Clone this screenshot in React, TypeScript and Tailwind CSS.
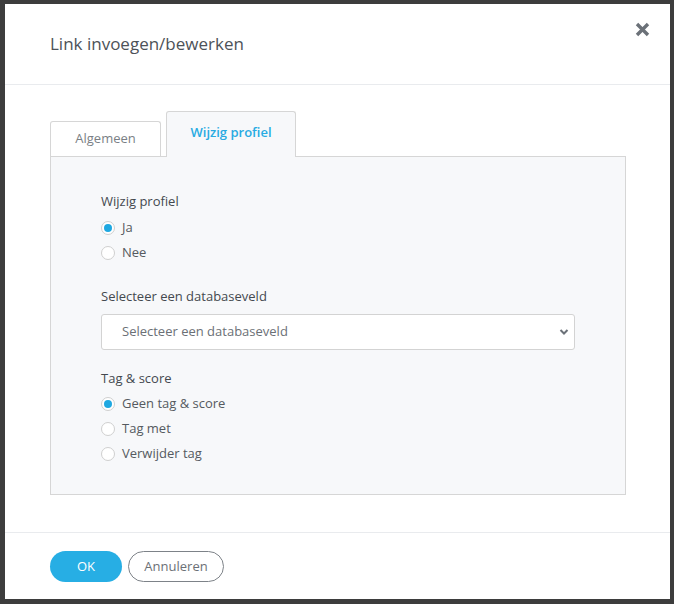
import React from 'react';

const font = { fontFamily: '"Open Sans", "Noto Sans", Arial, sans-serif' };

function Radio({ label, checked }: { label: string; checked?: boolean }) {
  return (
    <label className="flex h-[25px] items-center gap-[7px] text-[13px] text-[#555a60]">
      <span className="flex h-[14px] w-[14px] items-center justify-center rounded-full border border-[#cfcfcf] bg-white">
        {checked && <span className="h-[8px] w-[8px] rounded-full bg-[#1fa8e1]" />}
      </span>
      {label}
    </label>
  );
}

export default function App() {
  return (
    <div className="min-h-screen bg-[#3d3d3d] pl-[5px] pt-[4px]" style={font}>
      <div className="flex h-[595px] w-[665px] flex-col bg-white">
        {/* header */}
        <div className="flex h-[81px] items-center border-b border-[#e9ebee] pl-[45px] pr-[20px]">
          <h2 className="flex-1 text-[17px] text-[#4d5258]">Link invoegen/bewerken</h2>
          <button className="mt-[-30px] text-[#6b7178]">
            <svg width="15" height="15" viewBox="0 0 15 15">
              <path d="M2 2 L13 13 M13 2 L2 13" stroke="currentColor" strokeWidth="3.4" strokeLinecap="butt" />
            </svg>
          </button>
        </div>

        {/* body */}
        <div className="flex-1 pl-[45px] pr-[44px] pt-[26px]">
          <div className="flex items-end gap-[5px]">
            <div className="flex h-[35px] w-[111px] items-center justify-center rounded-t-[3px] border border-b-0 border-[#d6d6d6] bg-white text-[13px] text-[#7a7f85]">
              Algemeen
            </div>
            <div className="relative z-10 -mb-px flex h-[46px] w-[130px] items-center justify-center rounded-t-[3px] border border-b-0 border-[#d6d6d6] bg-[#f7f8fa] pb-[3px] text-[13px] font-semibold text-[#29abe2]">
              Wijzig profiel
            </div>
          </div>
          <div className="border border-[#d6d6d6] bg-[#f7f8fa] pb-[28px] pl-[50px] pr-[50px] pt-[35px]">
            <div className="h-[18px] text-[13px] leading-[18px] text-[#44494f]">Wijzig profiel</div>
            <div className="mt-[5px]">
              <Radio label="Ja" checked />
              <Radio label="Nee" />
            </div>
            <div className="mt-[22px] h-[18px] text-[13px] leading-[18px] text-[#44494f]">Selecteer een databaseveld</div>
            <div className="mt-[9px] flex h-[36px] items-center justify-between rounded-[3px] border border-[#d3d3d3] bg-white pl-[20px] pr-[5px] text-[13px] text-[#6b7076]">
              <span>Selecteer een databaseveld</span>
              <svg width="10" height="8" viewBox="0 0 10 8" className="text-[#6b7178]">
                <path d="M1.5 2 L5 5.5 L8.5 2" fill="none" stroke="currentColor" strokeWidth="2" />
              </svg>
            </div>
            <div className="mt-[19px] h-[18px] text-[13px] leading-[18px] text-[#44494f]">Tag &amp; score</div>
            <div className="mt-[4px]">
              <Radio label="Geen tag & score" checked />
              <Radio label="Tag met" />
              <Radio label="Verwijder tag" />
            </div>
          </div>
        </div>

        {/* footer */}
        <div className="flex h-[67px] gap-[6px] border-t border-[#e9ebee] px-[45px] pt-[18px]">
          <button className="h-[31px] w-[72px] rounded-full bg-[#27aee4] text-[13px] text-white">OK</button>
          <button className="h-[31px] w-[96px] rounded-full border border-[#7d8288] text-[13px] text-[#6b7076]">
            Annuleren
          </button>
        </div>
      </div>
    </div>
  );
}
